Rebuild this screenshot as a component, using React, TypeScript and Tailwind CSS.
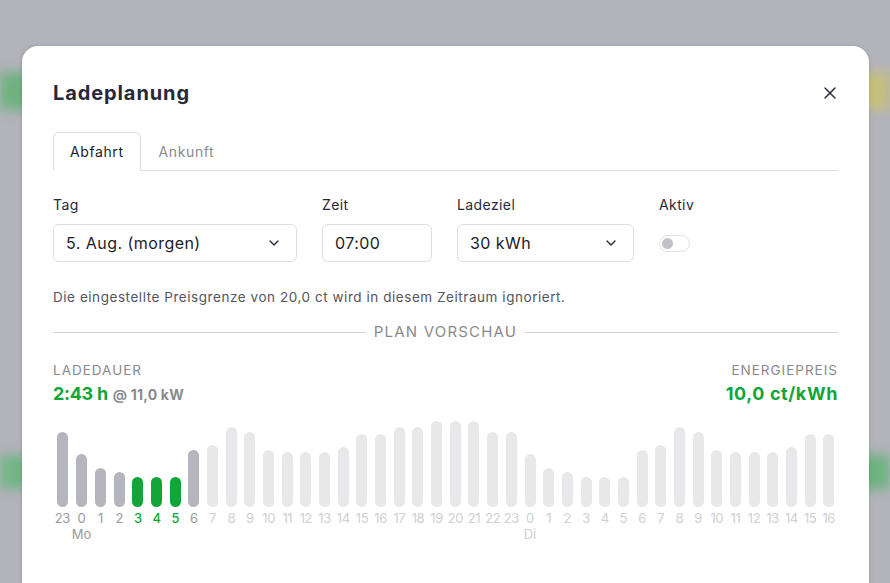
import { X, ChevronDown } from "lucide-react";

type Slot = { hour: number; h: number; state: "past" | "active" | "future"; day?: string };

const HEIGHTS = [75, 53, 39, 35, 30, 30, 30, 57, 62, 80, 75, 57, 55, 55, 55, 60, 73, 73, 80, 80, 86, 86, 86, 75, 75, 53, 39, 35, 30, 30, 30, 57, 62, 80, 75, 57, 55, 55, 55, 60, 73, 73];

const slots: Slot[] = HEIGHTS.map((h, i) => {
  const hour = (23 + i) % 24;
  let state: Slot["state"] = "future";
  if (i <= 3 || i === 7) state = "past";
  if (i >= 4 && i <= 6) state = "active";
  const day = i === 1 ? "Mo" : i === 25 ? "Di" : undefined;
  return { hour, h, state, day };
});

const barColor = { past: "bg-[#b5b5bd]", active: "bg-[#12a537]", future: "bg-[#e8e8ea]" };
const labelColor = { past: "text-[#9a9a9a]", active: "text-[#12a537] font-medium", future: "text-[#cfcfcf]" };

function Field({ label, children }: { label: string; children: React.ReactNode }) {
  return (
    <div className="flex flex-col gap-[9px]">
      <span className="text-[14px] tracking-[0.4px] text-[#28283c]">{label}</span>
      {children}
    </div>
  );
}

function SelectBox({ value, width }: { value: string; width: string }) {
  return (
    <div className={`flex h-[38px] ${width} items-center justify-between rounded-[6px] border border-[#dedee2] pl-[12px] pr-[14px] text-[16px] tracking-[0.45px] text-[#1c1c28]`}>
      <span>{value}</span>
      <ChevronDown size={16} strokeWidth={2} className="text-[#28283c]" />
    </div>
  );
}

export default function App() {
  return (
    <div
      className="relative h-[583px] w-[890px] overflow-hidden bg-[#b3b3bb]"
      style={{ fontFamily: "Inter, 'Liberation Sans', sans-serif" }}
    >
      {/* blurred page behind the overlay */}
      <div className="absolute inset-0 blur-[6px]">
        <div className="mt-[72px] flex h-[38px] justify-between">
          <div className="w-[60px] bg-[#6fb17f]" />
          <div className="w-[60px] bg-[#c5bf7c]" />
        </div>
        <div className="mt-[345px] flex h-[34px] justify-between">
          <div className="w-[60px] bg-[#73b585]" />
          <div className="w-[60px] bg-[#6db37f]" />
        </div>
      </div>

      <div className="absolute left-[22px] top-[46px] h-[560px] w-[847px] rounded-[16px] bg-white px-[31px] pt-[32px] shadow-[0_0_4px_rgba(0,0,0,0.15)]">
        <div className="flex h-[30px] items-center justify-between">
          <h2 className="text-[20px] font-bold tracking-[0.9px] text-[#28283c]">Ladeplanung</h2>
          <X size={20} strokeWidth={1.7} className="mr-[-2px] text-[#28283c]" />
        </div>

        {/* tabs */}
        <div className="mt-[24px] flex border-b border-[#dedee2]">
          <div className="-mb-px flex h-[39px] items-center rounded-t-[6px] border border-b-white border-[#dedee2] px-[16px] text-[14px] tracking-[0.6px] text-[#1c1c28]">
            Abfahrt
          </div>
          <div className="flex h-[38px] items-center px-[18px] text-[14px] tracking-[0.6px] text-[#8a8a8e]">Ankunft</div>
        </div>

        {/* form row */}
        <div className="mt-[23px] flex gap-[25px]">
          <Field label="Tag">
            <SelectBox value="5. Aug. (morgen)" width="w-[244px]" />
          </Field>
          <Field label="Zeit">
            <div className="flex h-[38px] w-[110px] items-center rounded-[6px] border border-[#dedee2] px-[12px] text-[16px] tracking-[0.45px] text-[#1c1c28]">
              07:00
            </div>
          </Field>
          <Field label="Ladeziel">
            <SelectBox value="30 kWh" width="w-[177px]" />
          </Field>
          <Field label="Aktiv">
            <div className="flex h-[38px] items-center">
              <div className="flex h-[17px] w-[31px] items-center rounded-full border border-[#e2e2e6] bg-white px-[2px]">
                <div className="h-[11px] w-[11px] rounded-full bg-[#c2c2c6]" />
              </div>
            </div>
          </Field>
        </div>

        <p className="mt-[25px] text-[13.5px] tracking-[0.55px] text-[#55555d]">
          Die eingestellte Preisgrenze von 20,0 ct wird in diesem Zeitraum ignoriert.
        </p>

        {/* divider */}
        <div className="mt-[14px] flex items-center gap-[8px]">
          <div className="h-px flex-1 bg-[#d0d0d4]" />
          <span className="text-[15px] uppercase tracking-[1.2px] text-[#8a8a8e]">Plan Vorschau</span>
          <div className="h-px flex-1 bg-[#d0d0d4]" />
        </div>

        {/* summary */}
        <div className="mt-[16px] flex justify-between">
          <div className="flex flex-col">
            <span className="text-[13.5px] uppercase tracking-[1px] text-[#8a8a8e]">Ladedauer</span>
            <span className="flex items-baseline gap-[5px]">
              <span className="text-[18px] font-bold tracking-[-0.3px] text-[#12a537]">2:43 h</span>
              <span className="text-[14px] font-bold tracking-[0.2px] text-[#8a8a8e]">@ 11,0 kW</span>
            </span>
          </div>
          <div className="flex flex-col items-end">
            <span className="text-[13.5px] uppercase tracking-[1px] text-[#8a8a8e]">Energiepreis</span>
            <span className="text-[18px] font-bold tracking-[0.6px] text-[#12a537]">10,0 ct/kWh</span>
          </div>
        </div>

        {/* chart */}
        <div className="mt-[12px] flex">
          {slots.map((s, i) => (
            <div key={i} className="flex flex-1 flex-col items-center">
              <div className="flex h-[88px] items-end">
                <div className={`w-[11px] rounded-full ${barColor[s.state]}`} style={{ height: s.h }} />
              </div>
              <span className={`mt-[3px] whitespace-nowrap text-[13px] leading-[16px] tracking-[-0.4px] ${labelColor[s.state]}`}>
                {s.hour}
              </span>
              <span className={`h-[16px] text-[13px] leading-[16px] ${s.state === "future" ? "text-[#cfcfcf]" : "text-[#9a9a9a]"}`}>
                {s.day ?? ""}
              </span>
            </div>
          ))}
        </div>
      </div>
    </div>
  );
}
